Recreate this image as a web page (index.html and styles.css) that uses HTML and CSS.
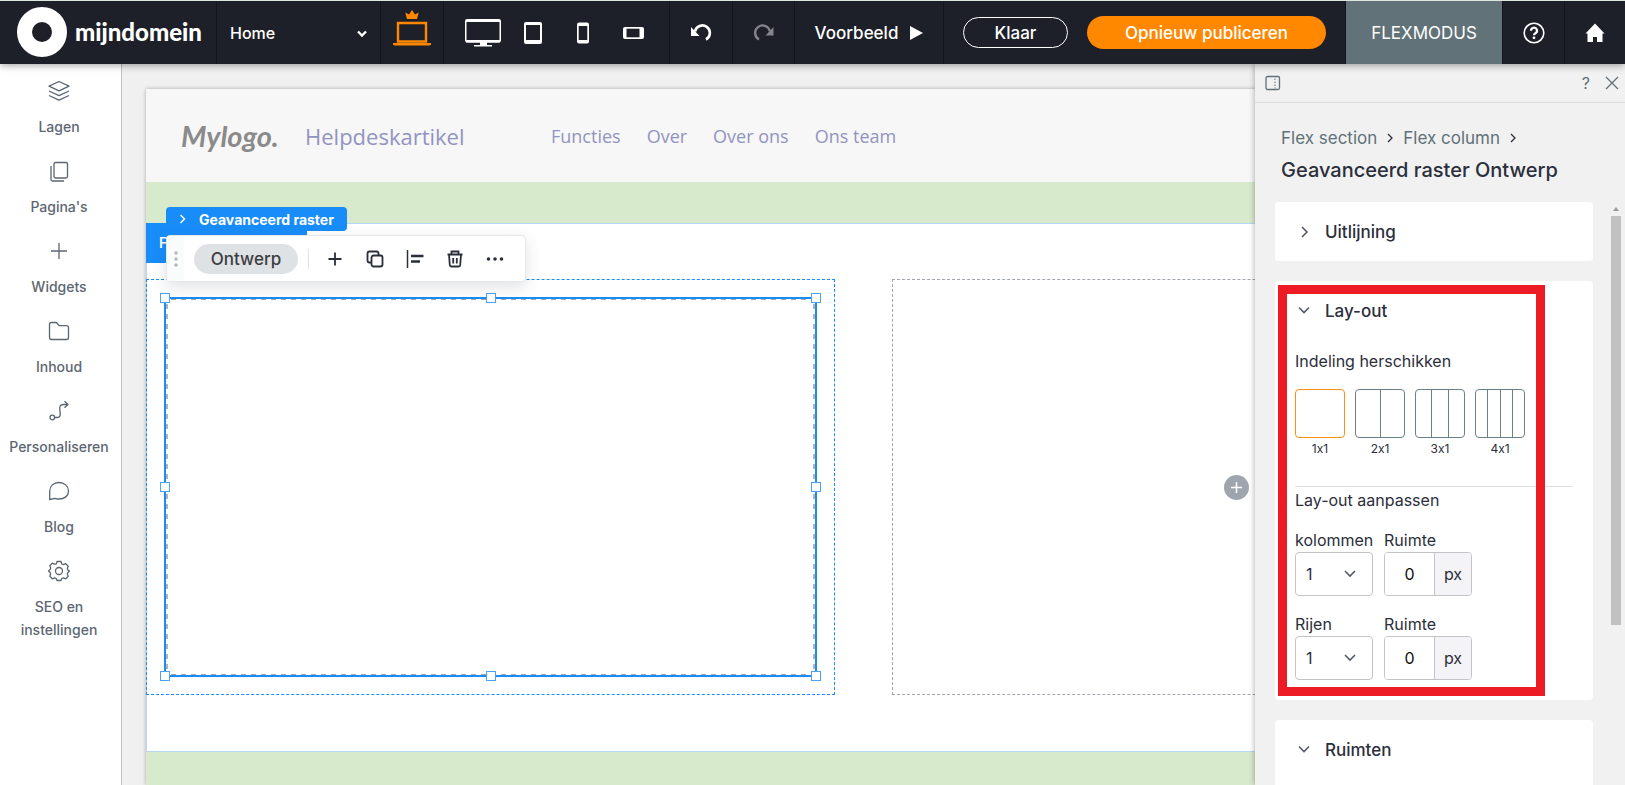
FILE: index.html
```html
<!DOCTYPE html>
<html lang="nl">
<head>
<meta charset="utf-8">
<title>mijndomein</title>
<link rel="stylesheet" href="styles.css">
</head>
<body>
<header class="topbar">
  <a class="brand" href="#">
    <svg width="50" height="50" viewBox="0 0 50 50"><circle cx="25" cy="25" r="17.5" fill="none" stroke="#fff" stroke-width="15"/></svg>
    <span>mijndomein</span>
  </a>
  <label class="page-picker">
    <select class="page-select" aria-label="Pagina"><option>Home</option></select>
    <svg class="page-chevron" width="10" height="8" viewBox="0 0 10 8"><path d="M1 1.500l4 4 4-4" fill="none" stroke="#fff" stroke-width="2.400"/></svg>
  </label>
  <button class="tool-cell tool-cell-crown" aria-label="Premium">
    <svg width="40" height="38" viewBox="0 0 40 38"><path d="M15 9l-1.700-6.500 3.700 2L20 0l3 4.500 3.700-2L25 9z" fill="#ff8800"/><path d="M6 13h28v18.500H6z" fill="none" stroke="#ff8800" stroke-width="2.400"/><path d="M1 33h38v1.500q-1 1-2 1H3q-1 0-2-1z" fill="#ff8800"/></svg>
  </button>
  <div class="devices">
    <button aria-label="Desktop"><svg width="36" height="28" viewBox="0 0 36 28"><rect x=".75" y=".75" width="34.500" height="22" rx="1.500" fill="none" stroke="#fff" stroke-width="1.500"/><path d="M1 1h34v2H1zM1 21h34v2.500H1zM15 23h7v3h5v1.500H9V26h6z" fill="#fff"/></svg></button>
    <button aria-label="Tablet"><svg width="18" height="22" viewBox="0 0 18 22"><rect width="18" height="22" rx="2" fill="#fff"/><path d="M2 3h14v15H2z" fill="#1e2029"/></svg></button>
    <button aria-label="Telefoon"><svg width="12" height="22" viewBox="0 0 12 22"><rect y=".5" width="12" height="21" rx="2" fill="#fff"/><path d="M1.700 4h8.600v14H1.700z" fill="#1e2029"/></svg></button>
    <button aria-label="Telefoon liggend"><svg width="21" height="12" viewBox="0 0 21 12"><rect width="21" height="12" rx="2" fill="#fff"/><path d="M3.500 1.700h13v8.600h-13z" fill="#1e2029"/></svg></button>
  </div>
  <button class="tool-cell" aria-label="Ongedaan maken"><svg width="22" height="20" viewBox="0 0 22 20"><path d="M5 8.500A7.500 7.500 0 1 1 16 16.500" fill="none" stroke="#fff" stroke-width="2.600"/><path d="M1 4v9h8.500z" fill="#fff"/></svg></button>
  <button class="tool-cell tool-cell-off" aria-label="Opnieuw"><svg width="22" height="20" viewBox="0 0 22 20"><path d="M17 8.500A7.500 7.500 0 1 0 6 16.500" fill="none" stroke="#85868b" stroke-width="2.300"/><path d="M20.500 4v8.500h-8z" fill="#85868b"/></svg></button>
  <button class="preview">Voorbeeld <svg width="13" height="14" viewBox="0 0 13 14"><path d="M0 0l13 7-13 7z" fill="#fff"/></svg></button>
  <div class="actions">
    <button class="btn-done">Klaar</button>
    <button class="btn-publish">Opnieuw publiceren</button>
  </div>
  <button class="flexmode">FLEXMODUS</button>
  <button class="tool-cell tool-cell-off" aria-label="Help"><svg width="22" height="22" viewBox="0 0 22 22"><circle cx="11" cy="11" r="9.800" fill="none" stroke="#fff" stroke-width="1.600"/><path d="M8 8.800a3 3 0 1 1 4.500 2.500Q11 12.200 11 13.200" fill="none" stroke="#fff" stroke-width="2.200"/><circle cx="11" cy="15.800" r="1.400" fill="#fff"/></svg></button>
  <button class="tool-cell tool-cell-last" aria-label="Dashboard"><svg width="20" height="20" viewBox="0 0 20 20"><path d="M10 .5l9.500 10h-2V19H12v-5H8v5H2.500v-8.500h-2z" fill="#fff"/></svg></button>
</header>

<div class="workspace">
  <nav class="sidebar">
    <a href="#"><svg viewBox="0 0 24 24"><path d="M12 2.500l10 4.700-10 4.700L2 7.200zM2 12l10 4.700L22 12M2 16.500l10 4.700 10-4.700"/></svg>Lagen</a>
    <a href="#"><svg viewBox="0 0 24 24"><rect x="7" y="3.500" width="13.500" height="15.500" rx="1.500"/><path d="M4 7v13.500q0 1.500 1.500 1.500H17"/></svg>Pagina's</a>
    <a href="#"><svg viewBox="0 0 24 24"><path d="M12 4v16M4 12h16"/></svg>Widgets</a>
    <a href="#"><svg viewBox="0 0 24 24"><path d="M2.500 18.500V5.500q0-2 2-2h4q1 0 1.700.8L11.500 6q.6.700 1.500.7h6.500q2 0 2 2v9.800q0 2-2 2h-15q-2 0-2-2z"/></svg>Inhoud</a>
    <a href="#"><svg viewBox="0 0 24 24"><circle cx="5.300" cy="18.500" r="2.300"/><path d="M7.800 18.500h2.500c5 0 2-7 2.500-10 .3-2.500 2-3 4-3H21M17.500 2.200L21 5.500l-3.500 3.300"/></svg>Personaliseren</a>
    <a href="#"><svg viewBox="0 0 24 24"><path d="M2.700 20.500V12c0-5 4-8.500 9.300-8.500s9.500 3.500 9.500 8.500-4 8-9.500 8c-2 0-3-.5-4-.7z"/></svg>Blog</a>
    <a href="#"><svg viewBox="0 0 24 24"><circle cx="12" cy="12" r="3.500"/><path d="M10 2.500h4l.8 2.500 1.600.7 2.400-1 2.400 2.500-.9 2.400.6 1.500 1.600.9v0l-1.600 1.500-.6 1.400.9 2.400-2.400 2.500-2.400-1-1.600.7-.8 2h-4l-.8-2-1.600-.7-2.400 1-2.400-2.500.9-2.400-.6-1.400L1.500 12l1.600-1.400.6-1.500-.9-2.400 2.400-2.500 2.400 1L9.200 5z"/></svg>SEO en instellingen</a>
  </nav>

  <main class="canvas">
    <div class="site">
      <div class="site-header">
        <span class="site-logo">Mylogo.</span>
        <span class="site-name">Helpdeskartikel</span>
        <div class="site-nav"><a href="#">Functies</a><a href="#">Over</a><a href="#">Over ons</a><a href="#">Ons team</a></div>
      </div>
      <div class="band"></div>
      <section class="flex-section">
        <div class="column column-active">
          <div class="selected">
            <i class="grip g-tl"></i><i class="grip g-t"></i><i class="grip g-tr"></i>
            <i class="grip g-l"></i><i class="grip g-r"></i>
            <i class="grip g-bl"></i><i class="grip g-b"></i><i class="grip g-br"></i>
          </div>
        </div>
        <div class="column">
          <button class="add" aria-label="Toevoegen"><svg width="25" height="25" viewBox="0 0 25 25"><path d="M12.500 7v11M7 12.500h11" stroke="#fff" stroke-width="1.500"/></svg></button>
        </div>
        <span class="section-tag">F</span>
        <span class="widget-tag"><svg width="7" height="10" viewBox="0 0 7 10"><path d="M1.500 1l4 4-4 4" fill="none" stroke="#fff" stroke-width="1.400"/></svg>Geavanceerd raster</span>
        <div class="toolbar">
          <span class="drag"><svg width="4" height="16" viewBox="0 0 4 16" fill="#b3b8bc"><circle cx="2" cy="2" r="1.700"/><circle cx="2" cy="8" r="1.700"/><circle cx="2" cy="14" r="1.700"/></svg></span>
          <button class="pill">Ontwerp</button>
          <span class="toolbar-line"></span>
          <div class="toolbar-icons">
            <button aria-label="Toevoegen"><svg viewBox="0 0 20 20"><path d="M10 3.500v13M3.500 10h13"/></svg></button>
            <button aria-label="Dupliceren"><svg viewBox="0 0 20 20"><rect x="6.500" y="6.500" width="11" height="11" rx="2"/><path d="M6 13.500H4.500q-2 0-2-2v-7q0-2 2-2h7q2 0 2 2V6"/></svg></button>
            <button aria-label="Uitlijnen"><svg viewBox="0 0 20 20"><path d="M2.500 1v18" stroke-width="1.500"/><path d="M6 7h12.500M6 12.500h9" stroke-width="2.400"/></svg></button>
            <button aria-label="Verwijderen"><svg viewBox="0 0 20 20"><path d="M2.500 5.500h15M6.500 5V2.500h7V5M4 5.500l.8 10.500q.1 1.500 1.500 1.500h7.400q1.400 0 1.500-1.500L16 5.500M8.200 9v5.500M11.800 9v5.500"/></svg></button>
            <button aria-label="Meer"><svg viewBox="0 0 20 20"><path d="M3.500 10h.01M10 10h.01M16.500 10h.01" stroke-width="3.600" stroke-linecap="round"/></svg></button>
          </div>
        </div>
      </section>
      <div class="band band-end"></div>
    </div>
  </main>

  <aside class="panel">
    <div class="panel-bar">
      <button aria-label="Vastzetten"><svg width="16" height="16" viewBox="0 0 16 16" fill="none" stroke="#5f7278"><rect x="1" y="1.500" width="13.500" height="13" rx="1.500" stroke-width="1.300"/><path d="M10 3.500v10" stroke-dasharray="1.500 1.500"/></svg></button>
      <span class="panel-bar-end">
        <button class="q" aria-label="Help">?</button>
        <button aria-label="Sluiten"><svg width="14" height="14" viewBox="0 0 14 14"><path d="M1 1l12 12M13 1L1 13" stroke="#5f7278" stroke-width="1.300"/></svg></button>
      </span>
    </div>
    <div class="crumbs">
      <a href="#">Flex section</a><svg width="6" height="10" viewBox="0 0 6 10"><path d="M1 1l4 4-4 4"/></svg>
      <a href="#">Flex column</a><svg width="6" height="10" viewBox="0 0 6 10"><path d="M1 1l4 4-4 4"/></svg>
    </div>
    <h1 class="panel-title">Geavanceerd raster Ontwerp</h1>
    <div class="cards">
      <section class="card">
        <h2><svg width="12" height="12" viewBox="0 0 12 12"><path d="M4 1l5 5-5 5"/></svg>Uitlijning</h2>
      </section>
      <section class="card card-layout">
        <h2><svg width="12" height="12" viewBox="0 0 12 12"><path d="M1 2.500l5 5 5-5"/></svg>Lay-out</h2>
        <div class="card-body">
          <p class="caption">Indeling herschikken</p>
          <div class="layouts">
            <button class="layout on"><span class="tiles"><i></i></span>1x1</button>
            <button class="layout"><span class="tiles"><i></i><i></i></span>2x1</button>
            <button class="layout"><span class="tiles"><i></i><i></i><i></i></span>3x1</button>
            <button class="layout"><span class="tiles"><i></i><i></i><i></i><i></i></span>4x1</button>
          </div>
          <p class="caption caption-ruled">Lay-out aanpassen</p>
          <div class="fields">
            <div class="field"><label for="cols">kolommen</label><div class="pick"><select id="cols"><option>1</option></select><svg width="12" height="8" viewBox="0 0 12 8"><path d="M1 1l5 5 5-5"/></svg></div></div>
            <div class="field"><label for="colgap">Ruimte</label><div class="amount"><input id="colgap" value="0"><span>px</span></div></div>
            <div class="field"><label for="rows">Rijen</label><div class="pick"><select id="rows"><option>1</option></select><svg width="12" height="8" viewBox="0 0 12 8"><path d="M1 1l5 5 5-5"/></svg></div></div>
            <div class="field"><label for="rowgap">Ruimte</label><div class="amount"><input id="rowgap" value="0"><span>px</span></div></div>
          </div>
        </div>
        <div class="highlight"></div>
      </section>
      <section class="card card-cut">
        <h2><svg width="12" height="12" viewBox="0 0 12 12"><path d="M1 2.500l5 5 5-5"/></svg>Ruimten</h2>
      </section>
    </div>
    <div class="scroll"><span class="scroll-arrow"></span><span class="scroll-thumb"></span></div>
  </aside>
</div>
</body>
</html>
```
FILE: styles.css
```css
* { box-sizing: border-box; }
body {
  margin: 0;
  height: 100vh;
  display: flex;
  flex-direction: column;
  overflow: hidden;
  font-family: "Inter", "Roboto", sans-serif;
  font-feature-settings: "calt" 0;
  color: #2b2e3b;
}
button, select, input { font: inherit; font-feature-settings: inherit; color: inherit; margin: 0; }
button { background: none; border: 0; padding: 0; }
a { color: inherit; text-decoration: none; }
svg { display: block; flex: none; }

/* Top bar */
.topbar {
  position: relative;
  z-index: 5;
  flex: none;
  display: flex;
  height: 64px;
  border-top: 1px solid #dce8de;
  background: #1e2029;
  color: #fff;
  font-size: 17px;
  font-weight: 500;
  box-shadow: 0 1px 8px rgba(0, 0, 0, .4);
}
.topbar > * { border-right: 1px solid #13151b; }
.brand {
  display: flex;
  align-items: center;
  gap: 8px;
  width: 217px;
  padding-left: 17px;
  padding-bottom: 2px;
  font-family: "Lato", sans-serif;
  font-size: 24px;
  font-weight: 900;
}
.page-picker { position: relative; width: 164px; }
.page-select {
  appearance: none;
  width: 100%;
  height: 100%;
  padding: 0 13px;
  border: 0;
  background: none;
  font-size: 16px;
}
.page-chevron { position: absolute; right: 13px; top: 29px; }
.tool-cell {
  display: flex;
  align-items: center;
  justify-content: center;
  width: 63px;
}
.tool-cell-crown { padding-bottom: 8px; }
.tool-cell-off { width: 62px; }
.tool-cell-last { width: 60px; border: 0; }
.devices {
  display: flex;
  align-items: center;
  width: 226px;
  padding-left: 14px;
}
.devices button { display: flex; justify-content: center; width: 50px; }
.preview {
  display: flex;
  align-items: center;
  justify-content: center;
  gap: 12px;
  width: 149px;
}
.actions {
  flex: 1;
  display: flex;
  align-items: center;
  justify-content: center;
  gap: 19px;
}
.btn-done {
  width: 105px;
  height: 31px;
  border: 1px solid #fff;
  border-radius: 16px;
}
.btn-publish {
  width: 239px;
  height: 33px;
  border-radius: 17px;
  background: #ff8800;
}
.flexmode { width: 157px; background: #617278; font-weight: 400; }

/* Workspace */
.workspace { position: relative; flex: 1; display: flex; min-height: 0; }
.sidebar {
  flex: none;
  display: flex;
  flex-direction: column;
  gap: 21px;
  width: 122px;
  padding: 15px 3px 0 0;
  border-right: 1px solid #c4c4c4;
  background: #fff;
  color: #5c6672;
  font-size: 14px;
  font-weight: 500;
  line-height: 23px;
  text-align: center;
}
.sidebar a {
  display: flex;
  flex-direction: column;
  align-items: center;
  gap: 12px;
}
.sidebar svg {
  width: 24px;
  height: 24px;
  fill: none;
  stroke: #5c6672;
  stroke-width: 1.3;
  stroke-linejoin: round;
}
.canvas {
  flex: 1;
  display: flex;
  min-width: 0;
  padding: 25px 44px 0 24px;
  background: #f0f0f0;
}
.site {
  flex: 1;
  display: flex;
  flex-direction: column;
  box-shadow: 0 0 4px rgba(0, 0, 0, .3);
}
.site-header {
  display: flex;
  align-items: center;
  height: 93px;
  padding-left: 35px;
  background: #f7f7f7;
  color: #9294c0;
  font-family: "Open Sans", sans-serif;
  font-size: 18px;
}
.site-logo {
  width: 124px;
  color: #8a8a8a;
  font-family: "Lato", cursive;
  font-size: 29px;
  font-style: italic;
  font-weight: 700;
}
.site-name { width: 246px; font-size: 22px; }
.site-nav { display: flex; gap: 26px; }
.band { height: 41px; background: #d8eacc; }
.band-end { flex: 1; }
.flex-section {
  position: relative;
  display: grid;
  grid-template-columns: 1fr 1fr;
  gap: 57px;
  height: 529px;
  padding: 55px 0 56px;
  border: solid #b8d6f8;
  border-width: 1px 0;
  box-shadow: inset 1px 0 #b8d6f8;
  background: #fff;
}
.column {
  display: flex;
  align-items: center;
  justify-content: center;
  border: 1px dashed #a0a6ab;
}
.column-active { padding: 17px; border-color: #188dfa; }
.selected {
  position: relative;
  align-self: stretch;
  flex: 1;
  border: 2px solid #188df5;
  background:
    repeating-linear-gradient(90deg, transparent 0 5px, #a5a5a5 5px 10px) top / 100% 1px no-repeat,
    repeating-linear-gradient(90deg, transparent 0 5px, #a5a5a5 5px 10px) bottom / 100% 1px no-repeat,
    repeating-linear-gradient(transparent 0 5px, #b5b5b5 5px 10px) left / 2px 100% no-repeat,
    repeating-linear-gradient(transparent 0 5px, #b5b5b5 5px 10px) right / 2px 100% no-repeat;
}
.grip {
  position: absolute;
  width: 10px;
  height: 10px;
  border: 1px solid #4aa3f8;
  background: #fff;
}
.g-tl, .g-t, .g-tr { top: -6px; }
.g-bl, .g-b, .g-br { bottom: -6px; }
.g-tl, .g-l, .g-bl { left: -6px; }
.g-tr, .g-r, .g-br { right: -6px; }
.g-t, .g-b { left: calc(50% - 5px); }
.g-l, .g-r { top: calc(50% - 5px); }
.add {
  width: 25px;
  height: 25px;
  border-radius: 50%;
  background: #9fa5ae;
}
.section-tag {
  position: absolute;
  left: 0;
  top: -1px;
  width: 161px;
  height: 40px;
  padding-left: 13px;
  background: #188dfa;
  color: #fff;
  font-size: 14px;
  font-weight: 600;
  line-height: 40px;
}
.widget-tag {
  position: absolute;
  left: 20px;
  top: -17px;
  display: flex;
  align-items: center;
  gap: 13px;
  height: 24px;
  padding: 0 13px;
  border-radius: 4px;
  background: #188dfa;
  color: #fff;
  font-size: 14px;
  font-weight: 700;
}
.toolbar {
  position: absolute;
  left: 20px;
  top: 11px;
  display: flex;
  align-items: center;
  width: 360px;
  height: 47px;
  border: 1px solid #e6e8ea;
  border-radius: 4px;
  background: #fff;
  box-shadow: 0 5px 16px rgba(40, 50, 70, .14);
}
.drag {
  display: flex;
  align-items: center;
  justify-content: center;
  width: 17px;
  height: 100%;
  background: #fafbfb;
}
.pill {
  width: 104px;
  height: 30px;
  margin-left: 10px;
  border-radius: 15px;
  background: #dfe2e4;
  color: #3b3d42;
  font-size: 17px;
  font-weight: 500;
}
.toolbar-line { width: 1px; height: 20px; margin-left: 10px; background: #dfe1e3; }
.toolbar-icons { display: flex; gap: 20px; margin-left: 16px; }
.toolbar-icons svg {
  width: 20px;
  height: 20px;
  fill: none;
  stroke: #2b2e3b;
  stroke-width: 1.8;
}

/* Properties panel */
.panel {
  position: absolute;
  top: 0;
  right: 0;
  bottom: 0;
  width: 370px;
  overflow: hidden;
  background: #f1f1f1;
  box-shadow: 0 0 6px rgba(0, 0, 0, .35);
}
.panel-bar {
  display: flex;
  align-items: center;
  justify-content: space-between;
  height: 39px;
  padding: 0 6px 0 10px;
  border-bottom: 1px solid #dcdcdc;
}
.panel-bar-end { display: flex; align-items: center; gap: 15px; }
.q { color: #5f7278; font-size: 16px; }
.crumbs {
  display: flex;
  align-items: center;
  gap: 10px;
  padding: 24px 0 0 26px;
  color: #5f7278;
  font-size: 17px;
  line-height: 22px;
}
.crumbs svg { fill: none; stroke: #2b2e3b; stroke-width: 1.3; }
.panel-title {
  margin: 8px 0 0 26px;
  font-size: 20px;
  font-weight: 500;
  line-height: 26px;
}
.cards {
  display: flex;
  flex-direction: column;
  gap: 20px;
  padding: 19px 32px 0 20px;
}
.card {
  position: relative;
  border-radius: 4px;
  background: #fff;
}
.card h2 {
  display: flex;
  align-items: center;
  gap: 15px;
  height: 59px;
  margin: 0;
  padding-left: 23px;
  font-size: 17px;
  font-weight: 500;
}
.card h2 svg { fill: none; stroke: #555a66; stroke-width: 1.6; }
.card-cut { height: 100px; }
.card-body { padding: 10px 20px 20px; }
.caption { margin: 0; font-size: 16px; line-height: 22px; }
.caption-ruled { margin-top: 29px; padding-top: 2px; border-top: 1px solid #dfdfe2; }
.layouts { display: flex; gap: 10px; padding-top: 17px; }
.layout {
  display: flex;
  flex-direction: column;
  align-items: center;
  gap: 3px;
  width: 50px;
  font-size: 12px;
  line-height: 16px;
}
.tiles {
  display: flex;
  width: 50px;
  height: 49px;
  border: 1px solid #6c8087;
  border-radius: 4px;
}
.tiles i { flex: 1; }
.tiles i + i { border-left: 1px solid #6c8087; }
.on .tiles { border-color: #ff8f14; }
.fields {
  display: grid;
  grid-template-columns: 78px 88px;
  gap: 17px 11px;
  padding-top: 18px;
  font-size: 16px;
}
.field label { display: block; height: 23px; line-height: 22px; }
.pick { position: relative; }
.pick select {
  appearance: none;
  display: block;
  width: 100%;
  height: 44px;
  padding: 0 10px;
  border: 1px solid #c4c4c8;
  border-radius: 4px;
  background: #fff;
}
.pick svg {
  position: absolute;
  right: 17px;
  top: 18px;
  fill: none;
  stroke: #555a66;
  stroke-width: 1.6;
}
.amount {
  display: flex;
  height: 44px;
  border: 1px solid #c4c4c8;
  border-radius: 4px;
  overflow: hidden;
}
.amount input {
  width: 49px;
  border: 0;
  outline: 0;
  padding: 0;
  color: #111;
  font-size: 16px;
  text-align: center;
}
.amount span {
  flex: 1;
  border-left: 1px solid #c4c4c8;
  background: #f4f4f7;
  line-height: 42px;
  text-align: center;
}
.highlight {
  position: absolute;
  inset: 4px 48px 4px 3px;
  border: 9px solid #ed1c24;
}
.scroll {
  position: absolute;
  right: 4px;
  top: 143px;
  display: flex;
  flex-direction: column;
  align-items: center;
  gap: 5px;
  width: 10px;
}
.scroll-arrow {
  border: solid transparent;
  border-width: 0 3px 4px;
  border-bottom-color: #9a9a9a;
}
.scroll-thumb { width: 10px; height: 409px; background: #c1c1c1; }
```
